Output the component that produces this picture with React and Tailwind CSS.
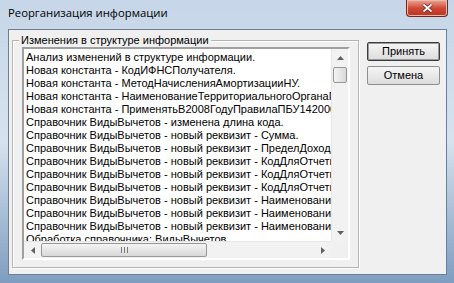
import React from "react";

const rows = [
  "Анализ изменений в структуре информации.",
  "Новая константа - КодИФНСПолучателя.",
  "Новая константа - МетодНачисленияАмортизацииНУ.",
  "Новая константа - НаименованиеТерриториальногоОрганаПФР.",
  "Новая константа - ПрименятьВ2008ГодуПравилаПБУ142000.",
  "Справочник ВидыВычетов - изменена длина кода.",
  "Справочник ВидыВычетов - новый реквизит - Сумма.",
  "Справочник ВидыВычетов - новый реквизит - ПределДохода.",
  "Справочник ВидыВычетов - новый реквизит - КодДляОтчетности2002.",
  "Справочник ВидыВычетов - новый реквизит - КодДляОтчетности2003.",
  "Справочник ВидыВычетов - новый реквизит - КодДляОтчетности2004.",
  "Справочник ВидыВычетов - новый реквизит - Наименование2002.",
  "Справочник ВидыВычетов - новый реквизит - Наименование2003.",
  "Справочник ВидыВычетов - новый реквизит - Наименование2004.",
  "Обработка справочника: ВидыВычетов.",
];

function Button({ children, active }) {
  return (
    <div
      className={`w-[73px] h-[19px] flex items-center justify-center rounded-[2px] border bg-gradient-to-b from-[#f6f6f6] to-[#dcdcdc] text-[11px] text-black ${
        active ? "border-[#3c3c3c] shadow-[inset_0_0_0_1px_#9a9a9a]" : "border-[#8e8f8f]"
      }`}
    >
      {children}
    </div>
  );
}

export default function App() {
  return (
    <div
      className="w-[454px] h-[283px] flex flex-col bg-gradient-to-b from-[#c6d6e8] via-[#d6e2ee] to-[#7f9dc0] overflow-hidden"
      style={{ fontFamily: '"Liberation Sans", Arial, sans-serif' }}
    >
      {/* title bar */}
      <div className="h-[29px] flex items-start justify-between pl-[8px] pr-[6px]">
        <span
          className="mt-[6px] text-[11.3px] leading-[14px] text-black"
          style={{ fontFamily: '"Open Sans", "Noto Sans", sans-serif' }}
        >
          Реорганизация информации
        </span>
        <div className="w-[42px] h-[17px] rounded-b-[4px] border border-t-0 border-[#6b2a22] bg-gradient-to-b from-[#e9a699] via-[#cf4a35] to-[#b8341f] flex items-center justify-center shadow-[inset_0_0_0_1px_#f0b8aa]">
          <svg width="11" height="10" viewBox="0 0 11 10">
            <path d="M1.5 1.5 L9.5 8.5 M9.5 1.5 L1.5 8.5" stroke="#5a1e16" strokeWidth="3.2" />
            <path d="M1.5 1.5 L9.5 8.5 M9.5 1.5 L1.5 8.5" stroke="#ffffff" strokeWidth="1.8" />
          </svg>
        </div>
      </div>

      {/* client area */}
      <div className="flex-1 pl-[8px] pr-[7px] pb-[8px] flex">
        <div className="flex-1 border border-[#6d7f95] bg-[#f0f0f0] flex items-start pl-[3px] gap-[8px]">
          {/* group box */}
          <div className="relative mt-[10px] w-[347px] h-[228px] border border-[#b4b4b4] shadow-[inset_1px_1px_0_#ffffff,1px_1px_0_#ffffff] pl-[9px] pt-[6px]">
            <span className="absolute left-[6px] -top-[8px] px-[2px] bg-[#f0f0f0] text-[11px] leading-[14px] text-black">
              Изменения в структуре информации
            </span>
            {/* list box */}
            <div className="w-[328px] h-[213px] border-2 border-t-[#a0a0a0] border-l-[#a0a0a0] border-b-[#ffffff] border-r-[#ffffff] shadow-[inset_1px_1px_0_#696969] flex flex-col bg-white">
              <div className="flex flex-1 min-h-0">
                <div className="flex-1 overflow-hidden pl-[2px] pt-[2px] bg-white">
                  {rows.map((r) => (
                    <div key={r} className="whitespace-nowrap text-[11px] leading-[13px] text-black">
                      {r}
                    </div>
                  ))}
                </div>
                {/* vertical scrollbar */}
                <div className="w-[17px] bg-[#f2f2f2] border-l border-[#e6e6e6] flex flex-col items-center">
                  <div className="h-[17px] flex items-center justify-center">
                    <svg width="7" height="4" viewBox="0 0 7 4"><path d="M0 4 L3.5 0 L7 4 Z" fill="#606060" /></svg>
                  </div>
                  <div className="mt-[1px] w-[14px] h-[16px] rounded-[2px] border border-[#979797] bg-gradient-to-r from-[#f4f4f4] to-[#d8d8d8]" />
                  <div className="flex-1" />
                  <div className="h-[17px] flex items-center justify-center">
                    <svg width="7" height="4" viewBox="0 0 7 4"><path d="M0 0 L7 0 L3.5 4 Z" fill="#606060" /></svg>
                  </div>
                </div>
              </div>
              {/* horizontal scrollbar */}
              <div className="h-[17px] flex bg-[#f2f2f2]">
                <div className="flex-1 flex items-center border-t border-[#e6e6e6]">
                  <div className="w-[17px] flex items-center justify-center">
                    <svg width="4" height="7" viewBox="0 0 4 7"><path d="M4 0 L0 3.5 L4 7 Z" fill="#606060" /></svg>
                  </div>
                  <div className="w-[166px] h-[14px] rounded-[2px] border border-[#979797] bg-gradient-to-b from-[#f4f4f4] to-[#d8d8d8] flex items-center justify-center gap-[2px]">
                    <div className="w-[1px] h-[6px] bg-[#7a7a7a]" />
                    <div className="w-[1px] h-[6px] bg-[#7a7a7a]" />
                    <div className="w-[1px] h-[6px] bg-[#7a7a7a]" />
                  </div>
                  <div className="flex-1" />
                  <div className="w-[17px] flex items-center justify-center">
                    <svg width="4" height="7" viewBox="0 0 4 7"><path d="M0 0 L4 3.5 L0 7 Z" fill="#606060" /></svg>
                  </div>
                </div>
                <div className="w-[17px] bg-[#f0f0f0]" />
              </div>
            </div>
          </div>

          {/* buttons */}
          <div className="mt-[12px] flex flex-col gap-[5px]">
            <Button active>Принять</Button>
            <Button>Отмена</Button>
          </div>
        </div>
      </div>
    </div>
  );
}
